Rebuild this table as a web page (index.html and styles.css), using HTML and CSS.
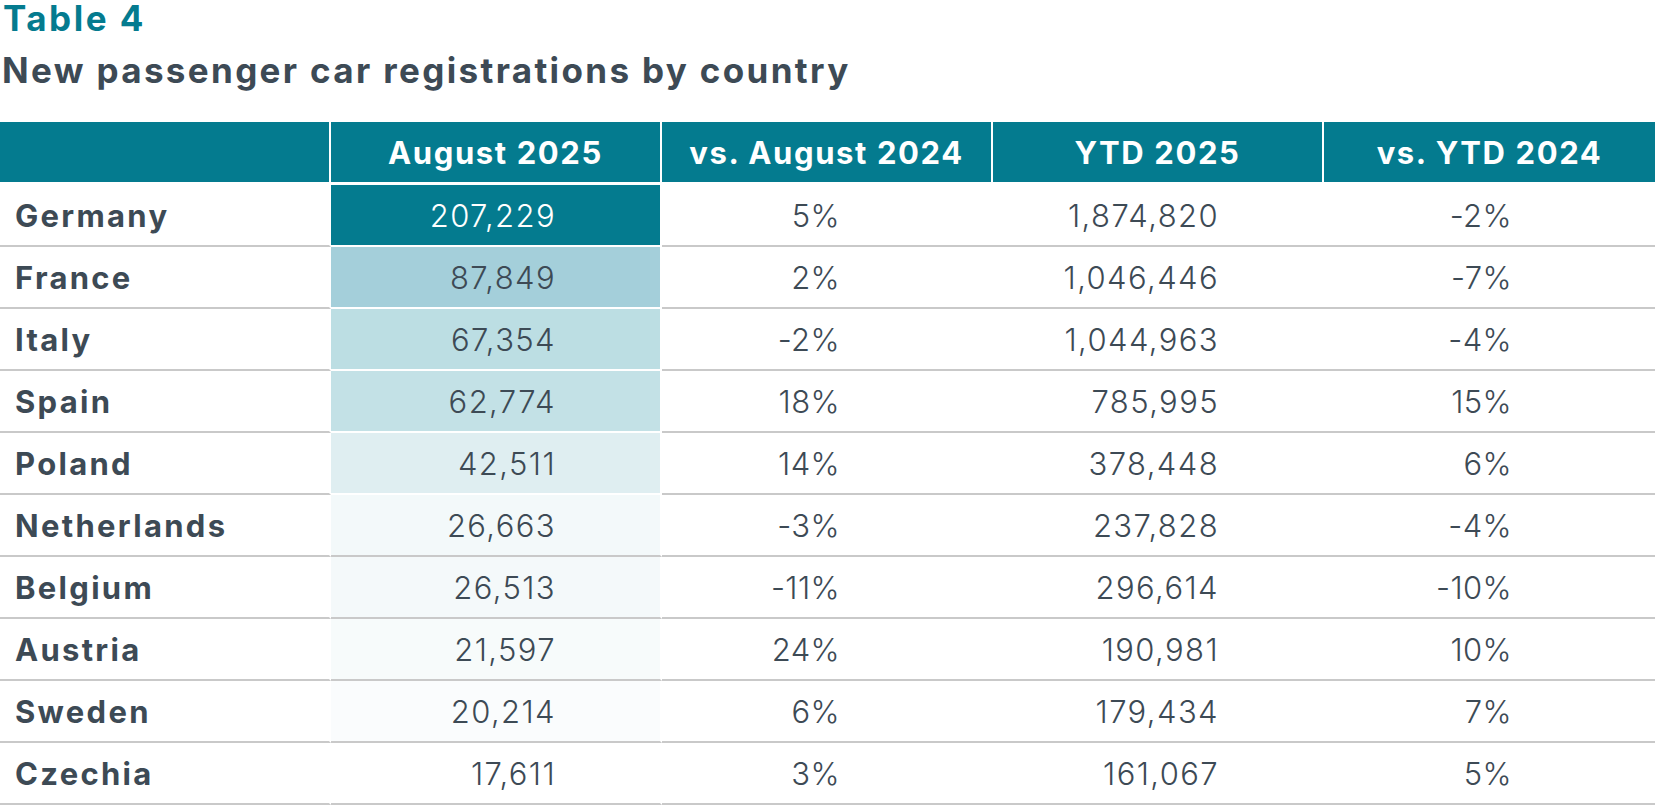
FILE: index.html
```html
<!DOCTYPE html>
<html lang="en">
<head>
<meta charset="utf-8">
<title>Table 4</title>
<link rel="stylesheet" href="styles.css">
</head>
<body>
<div class="page">
  <h1 class="title">Table 4</h1>
  <h2 class="subtitle">New passenger car registrations by country</h2>
  <table class="reg-table">
    <colgroup>
      <col class="c1"><col class="c2"><col class="c3"><col class="c4"><col class="c5">
    </colgroup>
    <thead>
      <tr>
        <th class="h"></th>
        <th class="h">August 2025</th>
        <th class="h">vs. August 2024</th>
        <th class="h">YTD 2025</th>
        <th class="h last">vs. YTD 2024</th>
      </tr>
    </thead>
    <tbody>
      <tr><td class="country">Germany</td><td class="num month s1">207,229</td><td class="pct m">5%</td><td class="num ytd">1,874,820</td><td class="pct y">-2%</td></tr>
      <tr><td class="country">France</td><td class="num month s2">87,849</td><td class="pct m">2%</td><td class="num ytd">1,046,446</td><td class="pct y">-7%</td></tr>
      <tr><td class="country">Italy</td><td class="num month s3">67,354</td><td class="pct m">-2%</td><td class="num ytd">1,044,963</td><td class="pct y">-4%</td></tr>
      <tr><td class="country">Spain</td><td class="num month s4">62,774</td><td class="pct m">18%</td><td class="num ytd">785,995</td><td class="pct y">15%</td></tr>
      <tr><td class="country">Poland</td><td class="num month s5">42,511</td><td class="pct m">14%</td><td class="num ytd">378,448</td><td class="pct y">6%</td></tr>
      <tr><td class="country">Netherlands</td><td class="num month s6">26,663</td><td class="pct m">-3%</td><td class="num ytd">237,828</td><td class="pct y">-4%</td></tr>
      <tr><td class="country">Belgium</td><td class="num month s7">26,513</td><td class="pct m">-11%</td><td class="num ytd">296,614</td><td class="pct y">-10%</td></tr>
      <tr><td class="country">Austria</td><td class="num month s8">21,597</td><td class="pct m">24%</td><td class="num ytd">190,981</td><td class="pct y">10%</td></tr>
      <tr><td class="country">Sweden</td><td class="num month s9">20,214</td><td class="pct m">6%</td><td class="num ytd">179,434</td><td class="pct y">7%</td></tr>
      <tr><td class="country">Czechia</td><td class="num month s10">17,611</td><td class="pct m">3%</td><td class="num ytd">161,067</td><td class="pct y">5%</td></tr>
    </tbody>
  </table>
</div>
</body>
</html>
```

FILE: styles.css
```css
html, body {
  margin: 0;
  padding: 0;
  background: #ffffff;
}

.page {
  width: 1655px;
  font-family: "Inter", "Lato", "Noto Sans", sans-serif;
  color: #3d4a55;
}

.title {
  margin: 0;
  padding-left: 3px;
  font-size: 35px;
  line-height: 36px;
  font-weight: 700;
  letter-spacing: 2.5px;
  color: #047b8f;
  height: 36px;
}

.subtitle {
  margin: 14px 0 0 0;
  padding-left: 2px;
  font-size: 35px;
  line-height: 40px;
  font-weight: 700;
  letter-spacing: 2.35px;
  color: #3d4a55;
  height: 40px;
}

.reg-table {
  margin-top: 32px;
  width: 1655px;
  table-layout: fixed;
  border-collapse: separate;
  border-spacing: 0;
}

.reg-table col { width: 331px; }

.h {
  height: 63px;
  padding: 0;
  background: #047b8f;
  color: #ffffff;
  font-size: 31px;
  font-weight: 700;
  letter-spacing: 1.6px;
  text-align: center;
  vertical-align: middle;
  border-right: 2px solid #ffffff;
  border-bottom: 3px solid #ffffff;
  box-sizing: border-box;
}
.h.last { border-right: 0; }

.reg-table td {
  height: 62px;
  box-sizing: border-box;
  padding: 0;
  border-bottom: 2px solid #c9c9c9;
  font-size: 31px;
  vertical-align: middle;
  white-space: nowrap;
}

.country {
  padding-left: 15px !important;
  font-weight: 700;
  letter-spacing: 2.3px;
  border-right: 2px solid #ffffff;
}

.num, .pct {
  font-family: "Inter", "Lato", "Noto Sans", sans-serif;
  font-weight: 300;
  letter-spacing: 0.4px;
  text-align: right;
}

.num { letter-spacing: 1.4px; }

.month {
  padding-right: 104px !important;
  border-right: 2px solid #ffffff;
}
.pct.m { padding-right: 153px !important; }
.ytd { padding-right: 105px !important; }
.pct.y { padding-right: 143px !important; }

.s1 { background: #047b8f; color: #ffffff; border-bottom-color: #ffffff !important; }
.s2 { background: #a4cfda; border-bottom-color: #ffffff !important; }
.s3 { background: #bcdee3; border-bottom-color: #ffffff !important; }
.s4 { background: #c3e1e6; border-bottom-color: #ffffff !important; }
.s5 { background: #dfeef1; border-bottom-color: #ffffff !important; }
.s6 { background: #f3f9fa; }
.s7 { background: #f4f9fa; }
.s8 { background: #f7fbfb; }
.s9 { background: #fafcfd; }
.s10 { background: #ffffff; }
```
